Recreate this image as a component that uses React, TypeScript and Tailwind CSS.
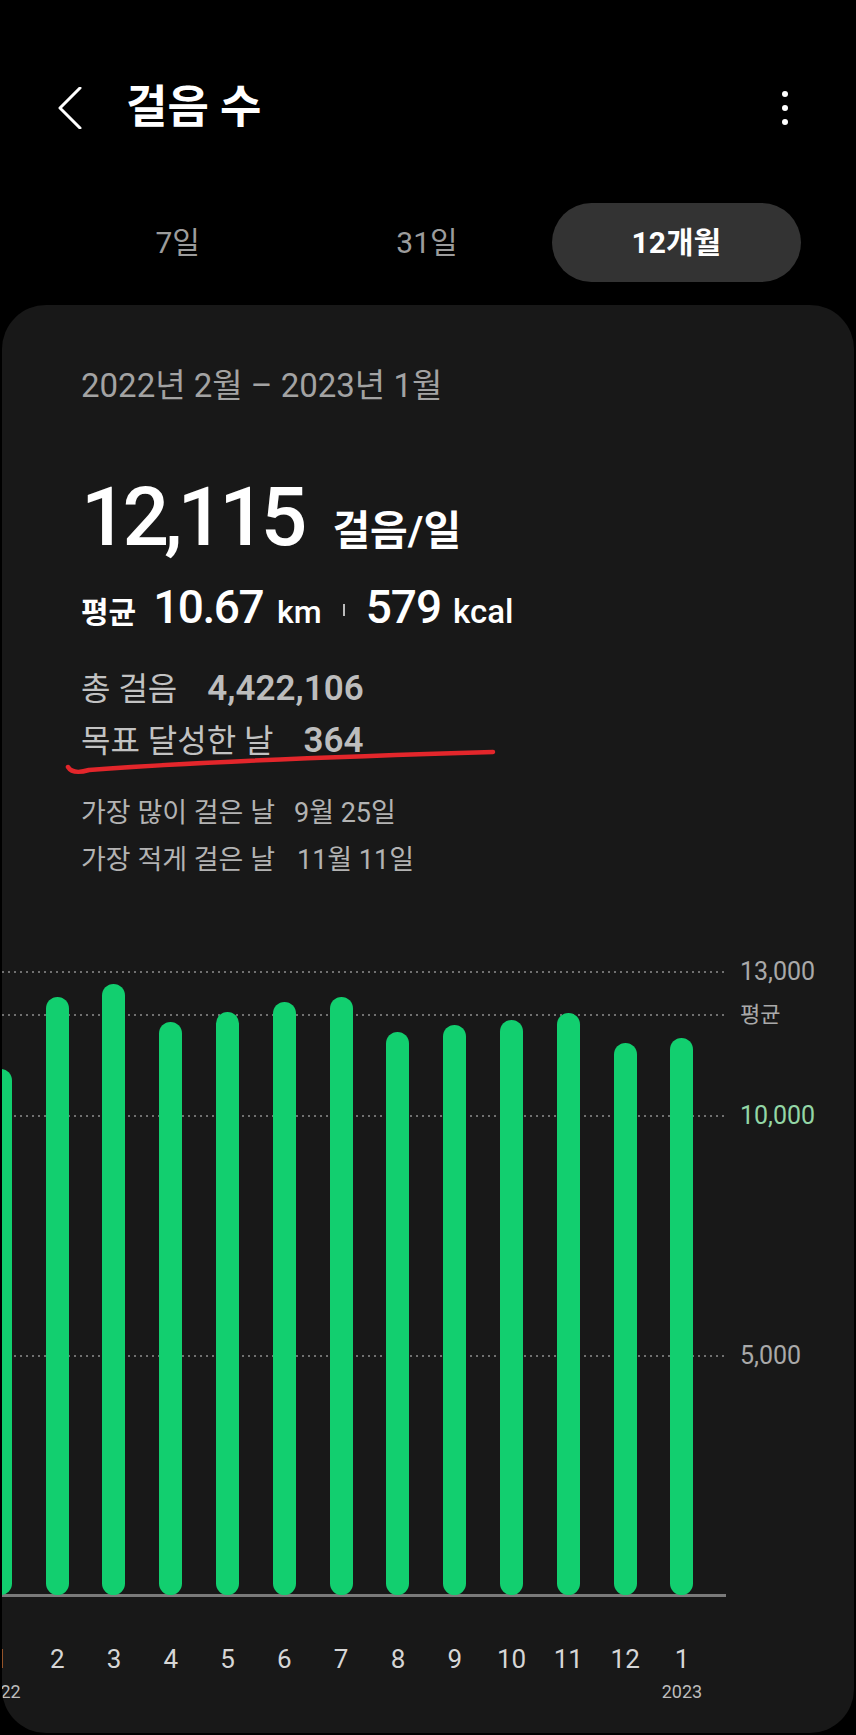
import React from 'react'

const SCALE = 0.0479
const PLOT_H = 655

const months = [
  { label: '1', steps: 10975, year: '2022' },
  { label: '2', steps: 12490 },
  { label: '3', steps: 12760 },
  { label: '4', steps: 11970 },
  { label: '5', steps: 12180 },
  { label: '6', steps: 12385 },
  { label: '7', steps: 12490 },
  { label: '8', steps: 11760 },
  { label: '9', steps: 11910 },
  { label: '10', steps: 12010 },
  { label: '11', steps: 12160 },
  { label: '12', steps: 11515 },
  { label: '1', steps: 11620, year: '2023' },
]

const gridLines = [13000, 12115, 10000, 5000]

const axisLabels = [
  { value: 13000, text: '13,000', className: 'text-[25px] text-[#a9a9a9]' },
  { value: 12115, text: '평균', className: 'text-[22px] text-[#a9a9a9]' },
  { value: 10000, text: '10,000', className: 'text-[25px] text-[#93d6a6]' },
  { value: 5000, text: '5,000', className: 'text-[25px] text-[#a9a9a9]' },
]

const yPos = (v: number) => PLOT_H - v * SCALE

function StepsChart() {
  return (
    <div className="mt-[56px] flex -ml-[30px]">
      <div className="w-[754px] shrink-0">
        <div className="relative h-[655px] flex items-end">
          {gridLines.map(v => (
            <div
              key={v}
              className="absolute left-0 right-0 h-[2px] bg-[repeating-linear-gradient(90deg,#707070_0_2px,transparent_2px_6px)]"
              style={{ top: yPos(v) - 1 }}
            />
          ))}
          <div className="absolute left-0 right-0 -bottom-[2px] h-[3px] bg-[#7a7a7a]" />
          {months.map((m, i) => (
            <div key={i} className="relative z-10 w-[56.8px] flex justify-center">
              <div
                className="w-[23px] rounded-full bg-[#12cf6f]"
                style={{ height: m.steps * SCALE }}
              />
            </div>
          ))}
        </div>
        <div className="mt-[49px] flex">
          {months.map((m, i) => (
            <div key={i} className="w-[56.8px] text-center text-[26px] leading-[30px] text-[#d6d6d6]">
              {m.label}
            </div>
          ))}
        </div>
        <div className="mt-[7px] flex text-[18px] leading-[22px] text-[#bdbdbd]">
          {months.map((m, i) => (
            <div key={i} className="w-[56.8px] text-center">
              {m.year}
            </div>
          ))}
        </div>
      </div>
      <div className="relative ml-[14px] h-[655px] w-[110px] shrink-0">
        {axisLabels.map(l => (
          <div
            key={l.text}
            className={`absolute left-0 leading-[30px] ${l.className}`}
            style={{ top: yPos(l.value) - 15 }}
          >
            {l.text}
          </div>
        ))}
      </div>
    </div>
  )
}

export default function App() {
  return (
    <div className="min-h-[1735px] bg-black pt-[68px] font-['Roboto','Noto_Sans_CJK_KR',sans-serif] text-white">
      {/* header */}
      <div className="flex h-[80px] items-center pl-[58px] pr-[68px]">
        <svg className="h-[42px] w-[24px]" viewBox="0 0 24 42" fill="none">
          <path d="M22 1 L2 21 L22 41" stroke="white" strokeWidth={3} strokeLinecap="round" strokeLinejoin="round" />
        </svg>
        <h1 className="ml-[44px] text-[45px] font-bold leading-[52px]">걸음 수</h1>
        <div className="ml-auto flex flex-col gap-[8px]">
          <span className="h-[6px] w-[6px] rounded-full bg-white" />
          <span className="h-[6px] w-[6px] rounded-full bg-white" />
          <span className="h-[6px] w-[6px] rounded-full bg-white" />
        </div>
      </div>

      {/* period tabs */}
      <div className="mt-[55px] ml-[53px] mr-[55px] grid h-[79px] grid-cols-3">
        <button className="text-[30px] text-[#9c9c9c]">7일</button>
        <button className="text-[30px] text-[#9c9c9c]">31일</button>
        <button className="rounded-full bg-[#333333] text-[30px] font-bold text-white">12개월</button>
      </div>

      {/* card */}
      <div className="relative mx-[2px] mt-[23px] h-[1428px] overflow-hidden rounded-[44px] bg-[#181818]">
        <div className="px-[79px] pt-[61px]">
          <p className="text-[33px] leading-[40px] text-[#a3a3a3]">2022년 2월 – 2023년 1월</p>

          <div className="mt-[71px] flex items-baseline">
            <span className="text-[82px] font-medium leading-[80px] tracking-[-5px]">12,115</span>
            <span className="ml-[30px] text-[41px] font-semibold leading-[50px]">걸음/일</span>
          </div>

          <div className="mt-[26px] flex items-baseline">
            <span className="text-[30px] font-bold leading-[48px]">평균</span>
            <span className="ml-[17px] text-[46px] font-medium leading-[48px] tracking-[-1.5px]">10.67</span>
            <span className="ml-[14px] text-[32px] font-medium leading-[48px]">km</span>
            <span className="mx-[21px] inline-block h-[12px] w-[2px] self-center bg-[#bbbbbb]" />
            <span className="text-[46px] font-medium leading-[48px] tracking-[-1px]">579</span>
            <span className="ml-[12px] text-[33px] font-medium leading-[48px]">kcal</span>
          </div>

          <div className="mt-[26px] flex items-baseline leading-[52px]">
            <span className="text-[32px] text-[#c2c2c2]">총 걸음</span>
            <span className="ml-[30px] text-[35px] font-semibold text-[#bdbdbd]">4,422,106</span>
          </div>
          <div className="flex items-baseline leading-[52px]">
            <span className="text-[32px] text-[#c2c2c2]">목표 달성한 날</span>
            <span className="ml-[30px] text-[35px] font-semibold text-[#bdbdbd]">364</span>
          </div>

          <div className="mt-[23px] flex items-baseline text-[27px] leading-[47px] text-[#b3b3b3]">
            <span>가장 많이 걸은 날</span>
            <span className="ml-[19px]">9월 25일</span>
          </div>
          <div className="flex items-baseline text-[27px] leading-[47px] text-[#b3b3b3]">
            <span>가장 적게 걸은 날</span>
            <span className="ml-[22px]">11월 11일</span>
          </div>
        </div>

        {/* hand-drawn red underline over the goal row */}
        <svg className="absolute left-[60px] top-[440px] h-[35px] w-[440px]" viewBox="0 0 440 35" fill="none">
          <path
            d="M6 22 C 9 27, 17 28, 27 25 C 120 18, 260 12, 431 7"
            stroke="#e3262b"
            strokeWidth={4.5}
            strokeLinecap="round"
          />
        </svg>

        <StepsChart />
      </div>
    </div>
  )
}
